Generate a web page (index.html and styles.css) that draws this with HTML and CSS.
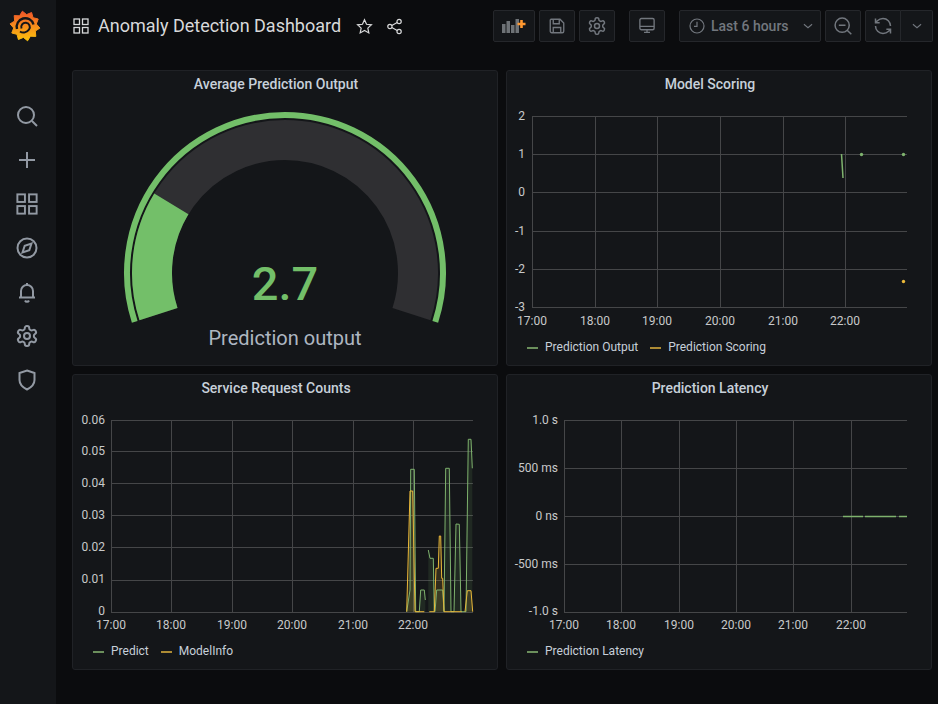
FILE: index.html
```html
<!DOCTYPE html>
<html>
<head>
    <meta charset="utf-8">
    <title>Anomaly Detection Dashboard</title>
    <link rel="stylesheet" href="styles.css">
</head>
<body>
    <svg class="defs" width="0" height="0">
        <symbol id="i-grid" viewBox="0 0 16 16">
            <rect x="1" y="1" width="5.5" height="5.5" /><rect x="9.5" y="1" width="5.5" height="5.5" />
            <rect x="1" y="9.5" width="5.5" height="5.5" /><rect x="9.5" y="9.5" width="5.5" height="5.5" />
        </symbol>
        <symbol id="i-gear" viewBox="0 0 24 24">
            <path d="M12.22 2h-.44a2 2 0 0 0-2 2v.18a2 2 0 0 1-1 1.73l-.43.25a2 2 0 0 1-2 0l-.15-.08a2 2 0 0 0-2.73.73l-.22.38a2 2 0 0 0 .73 2.73l.15.1a2 2 0 0 1 1 1.72v.51a2 2 0 0 1-1 1.74l-.15.09a2 2 0 0 0-.73 2.73l.22.38a2 2 0 0 0 2.73.73l.15-.08a2 2 0 0 1 2 0l.43.25a2 2 0 0 1 1 1.73V20a2 2 0 0 0 2 2h.44a2 2 0 0 0 2-2v-.18a2 2 0 0 1 1-1.73l.43-.25a2 2 0 0 1 2 0l.15.08a2 2 0 0 0 2.73-.73l.22-.39a2 2 0 0 0-.73-2.73l-.15-.08a2 2 0 0 1-1-1.74v-.5a2 2 0 0 1 1-1.74l.15-.09a2 2 0 0 0 .73-2.73l-.22-.38a2 2 0 0 0-2.73-.73l-.15.08a2 2 0 0 1-2 0l-.43-.25a2 2 0 0 1-1-1.73V4a2 2 0 0 0-2-2z" />
            <circle cx="12" cy="12" r="3" />
        </symbol>
    </svg>

    <div class="app">
        <nav class="sidemenu">
            <div class="logo">
                <svg width="32" height="32" viewBox="-16 -16 32 32">
                    <defs>
                        <linearGradient id="flame" x1="0" y1="1" x2="0" y2="0">
                            <stop offset="0" stop-color="#fcc30c" />
                            <stop offset="1" stop-color="#f0552a" />
                        </linearGradient>
                    </defs>
                    <polygon fill="url(#flame)" stroke="url(#flame)" stroke-linejoin="round" points="-2.6,-14.8 1.6,-11.4 6.6,-13.5 8,-8.3 13.2,-7 11.3,-2 14.9,2.1 10.3,5 10.8,10.4 5.4,10.2 2.6,14.8 -1.6,11.4 -6.6,13.5 -8,8.3 -13.2,7 -11.3,2 -14.9,-2.1 -10.3,-5 -10.8,-10.4 -5.4,-10.2" />
                    <path d="M8.5 -1.500A8.500 8.500 0 0 0 -8 3" fill="none" stroke="#141619" stroke-width="2.4" />
                    <path d="M-3.500 2.500A4.300 4.300 0 1 1 4 3.500C2 6.500 -2 7.500 -5 5.500" fill="none" stroke="#141619" stroke-width="2" />
                </svg>
            </div>
            <div class="sidemenu-items">
                <a class="sideitem"><svg width="24" height="24" viewBox="0 0 24 24"><circle cx="11" cy="11" r="8" /><path d="M17 17l5 5" /></svg></a>
                <a class="sideitem"><svg width="24" height="24" viewBox="0 0 24 24"><path d="M12 4v16M4 12h16" /></svg></a>
                <a class="sideitem"><svg class="grid-icon" width="22" height="22"><use href="#i-grid" /></svg></a>
                <a class="sideitem"><svg width="24" height="24" viewBox="0 0 24 24"><circle cx="12" cy="12" r="9.5" /><path d="M16.5 7.5l-2.2 6.8-6.8 2.2 2.2-6.8z" /></svg></a>
                <a class="sideitem"><svg width="24" height="24" viewBox="0 0 24 24"><path d="M6 17v-6a6 6 0 0 1 12 0v6M12 3v2M4 17.5h16M10 20.5a2.2 2.2 0 0 0 4 0" /></svg></a>
                <a class="sideitem"><svg width="24" height="24"><use href="#i-gear" /></svg></a>
                <a class="sideitem"><svg width="24" height="24" viewBox="0 0 24 24"><path d="M12 2.5l7.5 2.5v7c0 5-3.5 7.5-7.5 9.5-4-2-7.5-4.500-7.500-9.500V5z" /></svg></a>
            </div>
        </nav>

        <main class="main">
            <header class="topbar">
                <div class="title-group">
                    <svg class="title-icon grid-icon" width="16" height="16"><use href="#i-grid" /></svg>
                    <h1 class="title">Anomaly Detection Dashboard</h1>
                    <svg class="title-icon star" width="17" height="17" viewBox="0 0 24 24"><path d="M12 2.500l2.900 6.300 6.900.8-5.100 4.700 1.400 6.800-6.100-3.400-6.100 3.400 1.400-6.800-5.100-4.700 6.900-.8z" /></svg>
                    <svg class="title-icon share" width="17" height="17" viewBox="0 0 24 24"><circle cx="18.500" cy="5" r="3" /><circle cx="5.500" cy="12" r="3" /><circle cx="18.500" cy="19" r="3" /><path d="M8.200 10.600l7.600-4.200M8.200 13.400l7.600 4.200" /></svg>
                </div>
                <div class="toolbar">
                    <div class="btn-group">
                        <button class="btn btn-add">
                            <svg width="24" height="14" viewBox="0 0 24 14">
                                <rect x="0" y="5" width="3.500" height="9" fill="#6e7276" />
                                <rect x="4.500" y="2" width="3.500" height="12" fill="#6e7276" />
                                <rect x="9" y="6" width="3.500" height="8" fill="#6e7276" />
                                <rect x="13.500" y="0" width="3.500" height="14" fill="#6e7276" />
                                <path d="M19.500 1v8M15.500 5h8" stroke="#ff9830" stroke-width="2.600" />
                            </svg>
                        </button>
                        <button class="btn"><svg width="18" height="18" viewBox="0 0 24 24"><path d="M4 3h12l5 5v11a2 2 0 0 1-2 2H5a2 2 0 0 1-2-2V4zM7 3v6h8V3M7 21v-7h10v7" /></svg></button>
                        <button class="btn"><svg width="20" height="20"><use href="#i-gear" /></svg></button>
                    </div>
                    <button class="btn"><svg width="18" height="18" viewBox="0 0 24 24"><rect x="2.500" y="2" width="19" height="15" rx="2" /><path d="M2.500 12.500h19M8 20.500h8M12 17v3.500" /></svg></button>
                    <div class="btn-group">
                        <button class="btn btn-time">
                            <svg width="16" height="16" viewBox="0 0 24 24"><circle cx="12" cy="12" r="10.500" /><path d="M12 5.500V12.500H7.500" /></svg>
                            <span class="time-label">Last 6 hours</span>
                            <svg class="chevron" width="14" height="14" viewBox="0 0 24 24"><path d="M5 9l7 6 7-6" /></svg>
                        </button>
                        <button class="btn"><svg width="20" height="20" viewBox="0 0 24 24"><circle cx="11" cy="11" r="8.500" /><path d="M17 17l5 5M7 11h8" /></svg></button>
                        <div class="split">
                            <button class="btn btn-refresh"><svg width="20" height="20" viewBox="0 0 24 24"><path d="M21 12a9 9 0 0 0-9-9 9.750 9.750 0 0 0-6.740 2.740L3 8M3 3v5h5M3 12a9 9 0 0 0 9 9 9.750 9.750 0 0 0 6.740-2.740L21 16M16 16h5v5" /></svg></button>
                            <button class="btn btn-more"><svg class="chevron" width="14" height="14" viewBox="0 0 24 24"><path d="M5 9l7 6 7-6" /></svg></button>
                        </div>
                    </div>
                </div>
            </header>

            <section class="dashboard">
                <article class="panel">
                    <h2 class="panel-title">Average Prediction Output</h2>
                    <svg class="gauge" viewBox="73 98 424 267">
                        <path d="M134.730 321.820A158 158 0 1 1 435.270 321.820" fill="none" stroke="#73bf69" stroke-width="6" />
                        <path d="M158.510 314.100A133 133 0 1 1 411.490 314.100" fill="none" stroke="#2f2f32" stroke-width="40" />
                        <path d="M158.510 314.100A133 133 0 0 1 171.350 203.900" fill="none" stroke="#73bf69" stroke-width="40" />
                        <text class="gauge-value" x="285" y="300">2.7</text>
                        <text class="gauge-label" x="285" y="345">Prediction output</text>
                    </svg>
                </article>

                <article class="panel">
                    <h2 class="panel-title">Model Scoring</h2>
                    <svg class="chart" viewBox="507 98 424 236">
                        <g class="grid">
                            <path d="M532 116.500H907M532 154.500H907M532 192.500H907M532 231.500H907M532 269.500H907M532 307.500H907" />
                            <path d="M532.500 116V308M595.500 116V308M657.500 116V308M720.500 116V308M783.500 116V308M845.500 116V308" />
                        </g>
                        <g class="ylabels">
                            <text x="525" y="120">2</text><text x="525" y="158">1</text><text x="525" y="196">0</text>
                            <text x="525" y="235">-1</text><text x="525" y="273">-2</text><text x="525" y="311">-3</text>
                        </g>
                        <g class="xlabels">
                            <text x="532" y="325">17:00</text><text x="595" y="325">18:00</text><text x="657" y="325">19:00</text>
                            <text x="720" y="325">20:00</text><text x="783" y="325">21:00</text><text x="845" y="325">22:00</text>
                        </g>
                        <path class="line-green" d="M841.500 154L843 178" />
                        <circle cx="861.500" cy="154.500" r="1.700" fill="#7eb26d" />
                        <circle cx="903.500" cy="154.500" r="1.700" fill="#7eb26d" />
                        <circle cx="903.500" cy="281.500" r="1.700" fill="#eab839" />
                    </svg>
                    <div class="legend">
                        <span class="legend-item"><i class="dash green"></i>Prediction Output</span>
                        <span class="legend-item"><i class="dash orange"></i>Prediction Scoring</span>
                    </div>
                </article>

                <article class="panel">
                    <h2 class="panel-title">Service Request Counts</h2>
                    <svg class="chart" viewBox="73 402 424 236">
                        <g class="grid">
                            <path d="M111 420.500H473M111 451.500H473M111 483.500H473M111 515.500H473M111 547.500H473M111 580.500H473M111 612.500H473" />
                            <path d="M111.500 420V612M171.500 420V612M232.500 420V612M292.500 420V612M353.500 420V612M413.500 420V612" />
                        </g>
                        <g class="ylabels">
                            <text x="105" y="424">0.06</text><text x="105" y="455">0.05</text><text x="105" y="487">0.04</text>
                            <text x="105" y="519">0.03</text><text x="105" y="551">0.02</text><text x="105" y="583">0.01</text><text x="105" y="615">0</text>
                        </g>
                        <g class="xlabels">
                            <text x="111" y="629">17:00</text><text x="171" y="629">18:00</text><text x="232" y="629">19:00</text>
                            <text x="292" y="629">20:00</text><text x="353" y="629">21:00</text><text x="413" y="629">22:00</text>
                        </g>
                        <g class="area-green">
                            <path d="M406.700 611.700L410 590L410.700 469.300H414.300L415.700 611.700H419.300L420.700 590H424.300L425.300 600V611.700Z" />
                            <path d="M428.300 550L430 558.300H433.300L434.300 611.700H435L436.700 590H442.700L444 611.700L445.700 468.300H449.300L451 611.700H454L456 524L459.300 524.300L461 611.700H466L468.300 439.300H471L472.300 468.300V611.700H428.300Z" />
                        </g>
                        <g class="area-orange">
                            <path d="M406.700 611.700L410 491H412.700L415 611.700Z" />
                            <path d="M434.300 611.700L436 568.300H438.300L439.300 536H440.700L441.700 578.300H442.700L444 611.700Z" />
                            <path d="M465 611.700L467.300 590.700H471L472.700 611.700Z" />
                        </g>
                        <g class="series-green">
                            <path d="M406.700 611.700L410 590L410.700 469.300H414.300L415.700 611.700H419.300L420.700 590H424.300L425.300 600" />
                            <path d="M428.300 550L430 558.300H433.300L434.300 611.700H435L436.700 590H442.700L444 611.700L445.700 468.300H449.300L451 611.700H454L456 524L459.300 524.300L461 611.700H466L468.300 439.300H471L472.300 468.300" />
                        </g>
                        <g class="series-orange">
                            <path d="M406.700 611.700L410 491H412.700L415 611.700H424.300" />
                            <path d="M429.300 611.700H434.300L436 568.300H438.300L439.300 536H440.700L441.700 578.300H442.700L444 611.700H461.700" />
                            <path d="M465 611.700L467.300 590.700H471L472.700 611.700" />
                        </g>
                    </svg>
                    <div class="legend">
                        <span class="legend-item"><i class="dash green"></i>Predict</span>
                        <span class="legend-item"><i class="dash orange"></i>ModelInfo</span>
                    </div>
                </article>

                <article class="panel">
                    <h2 class="panel-title">Prediction Latency</h2>
                    <svg class="chart" viewBox="507 402 424 236">
                        <g class="grid">
                            <path d="M564 420.500H907M564 468.500H907M564 516.500H907M564 564.500H907M564 612.500H907" />
                            <path d="M564.500 420V612M621.500 420V612M679.500 420V612M736.500 420V612M793.500 420V612M851.500 420V612" />
                        </g>
                        <g class="ylabels">
                            <text x="558" y="424">1.0 s</text><text x="558" y="472">500 ms</text><text x="558" y="520">0 ns</text>
                            <text x="558" y="568">-500 ms</text><text x="558" y="615">-1.0 s</text>
                        </g>
                        <g class="xlabels">
                            <text x="564" y="629">17:00</text><text x="621" y="629">18:00</text><text x="679" y="629">19:00</text>
                            <text x="736" y="629">20:00</text><text x="793" y="629">21:00</text><text x="851" y="629">22:00</text>
                        </g>
                        <path class="line-green" d="M843 516.500H863M865 516.500H896M899 516.500H907" />
                    </svg>
                    <div class="legend">
                        <span class="legend-item"><i class="dash green"></i>Prediction Latency</span>
                    </div>
                </article>
            </section>
        </main>
    </div>
</body>
</html>
```

FILE: styles.css
```css
* {
    box-sizing: border-box;
}

html, body {
    height: 100%;
    margin: 0;
    overflow: hidden;
}

body {
    font-family: Roboto, "Liberation Sans", sans-serif;
    background-color: #0b0c0e;
    color: #c7d0d9;
}

.defs {
    position: absolute;
}

.app {
    display: flex;
    height: 704px;
}

/* side menu */
.sidemenu {
    width: 56px;
    flex-shrink: 0;
    background-color: #141619;
}

.logo {
    height: 94px;
    padding: 10px 0 0 9px;
}

.sideitem {
    display: flex;
    align-items: center;
    justify-content: center;
    height: 44px;
    padding-right: 2px;
}

.sideitem svg {
    fill: none;
    stroke: #9299a3;
    stroke-width: 2;
}

.sideitem .grid-icon {
    stroke-width: 1.4;
}

/* top bar */
.main {
    flex: 1;
    min-width: 0;
}

.topbar {
    display: flex;
    align-items: center;
    justify-content: space-between;
    height: 70px;
    padding: 0 5px 18px 17px;
}

.title-group {
    display: flex;
    align-items: center;
}

.title-icon {
    fill: none;
    stroke: #d8d9da;
    stroke-width: 1.7;
}

.title-icon.grid-icon {
    stroke-width: 1.3;
}

.title {
    margin: 0 15px 0 9px;
    font-size: 18px;
    font-weight: 400;
    line-height: 24px;
    color: #d8d9da;
}

.share {
    margin-left: 13px;
}

.toolbar {
    display: flex;
    gap: 14px;
}

.btn-group {
    display: flex;
    gap: 4px;
}

.btn {
    display: flex;
    align-items: center;
    justify-content: center;
    width: 36px;
    height: 32px;
    padding: 0;
    border: 1px solid #25272b;
    border-radius: 2px;
    background-color: #141619;
    color: #72777e;
    font-family: inherit;
}

.btn svg {
    fill: none;
    stroke: #72777e;
    stroke-width: 1.8;
}

.btn-add {
    width: 42px;
}

.btn-add svg {
    stroke: none;
}

.btn-time {
    justify-content: flex-start;
    width: 142px;
    padding-left: 9px;
}

.time-label {
    margin-left: 6px;
    font-size: 14px;
    font-weight: 500;
}

.chevron {
    margin-left: 12px;
}

.split {
    display: flex;
}

.btn-refresh {
    width: 36px;
    border-radius: 2px 0 0 2px;
}

.btn-more {
    width: 32px;
    border-left: 0;
    border-radius: 0 2px 2px 0;
}

.btn-more .chevron {
    margin-left: 0;
}

/* panels */
.dashboard {
    display: grid;
    grid-template-columns: 426px 426px;
    grid-template-rows: 296px 296px;
    gap: 8px;
    padding-left: 16px;
}

.panel {
    display: flex;
    flex-direction: column;
    background-color: #141619;
    border: 1px solid #202226;
    border-radius: 3px;
}

.panel-title {
    height: 27px;
    margin: 0;
    padding-right: 18px;
    font-size: 14px;
    font-weight: 500;
    line-height: 27px;
    text-align: center;
    color: #c7d0d9;
}

.gauge {
    display: block;
    width: 424px;
    height: 267px;
}

.gauge-value {
    font-size: 47px;
    font-weight: 500;
    fill: #73bf69;
    text-anchor: middle;
}

.gauge-label {
    font-size: 20px;
    fill: #aeb6c1;
    text-anchor: middle;
}

.chart {
    display: block;
    width: 424px;
    height: 236px;
}

.grid path {
    fill: none;
    stroke: #454648;
    stroke-width: 1;
}

.ylabels text, .xlabels text {
    font-size: 12px;
    fill: #c8c9ca;
}

.ylabels text {
    text-anchor: end;
}

.xlabels text {
    text-anchor: middle;
}

.line-green {
    fill: none;
    stroke: #7eb26d;
    stroke-width: 1.5;
}

.area-green path {
    fill: rgba(126, 178, 109, 0.12);
}

.area-orange path {
    fill: rgba(234, 184, 57, 0.14);
}

.series-green path {
    fill: none;
    stroke: #7eb26d;
    stroke-width: 1;
}

.series-orange path {
    fill: none;
    stroke: #eab839;
    stroke-width: 1;
}

.legend {
    display: flex;
    gap: 12px;
    padding: 5px 0 0 20px;
    font-size: 12px;
    line-height: 16px;
    color: #c7d0d9;
}

.legend-item {
    display: flex;
    align-items: center;
}

.dash {
    width: 11px;
    height: 2px;
    margin: 1px 7px 0 0;
}

.dash.green {
    background-color: #6b8f5c;
}

.dash.orange {
    background-color: #ad8b34;
}
```
